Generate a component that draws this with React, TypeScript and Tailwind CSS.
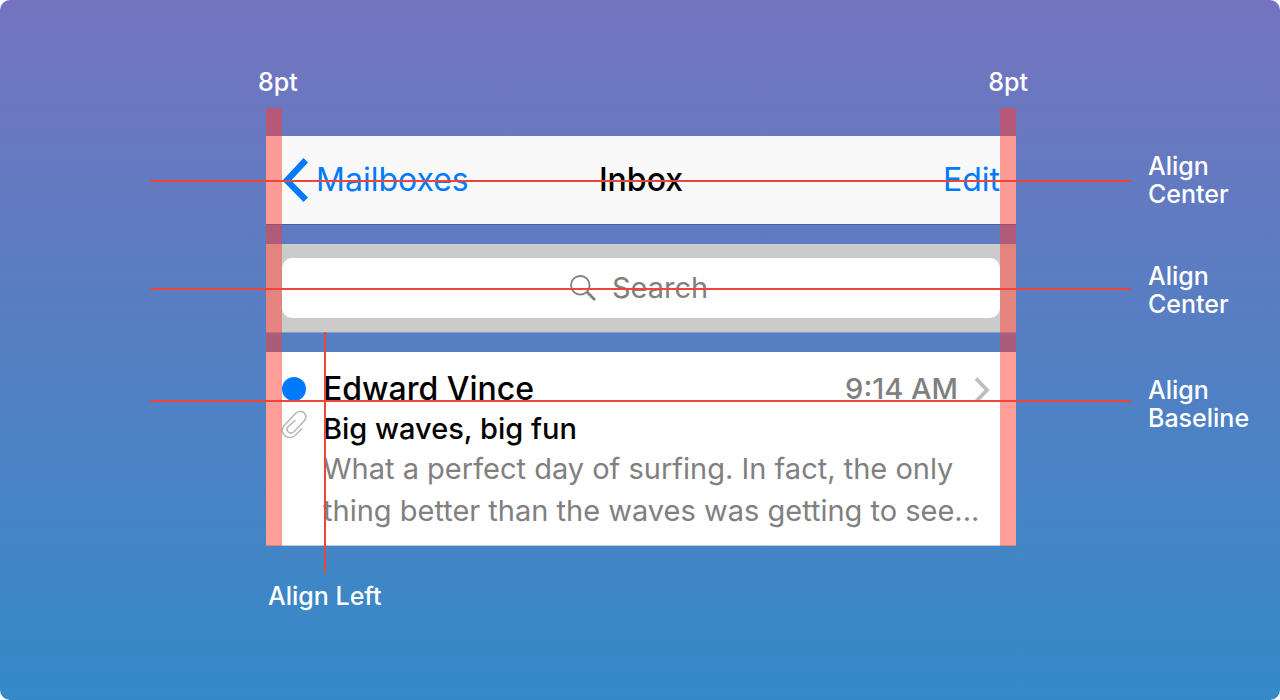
import type { ReactNode } from "react";

function HorizontalGuide({ className }: { className: string }) {
  return (
    <span
      aria-hidden="true"
      className={`pointer-events-none absolute -left-29 -right-[115px] z-20 h-0.5 bg-[#ee4439] ${className}`}
    />
  );
}

function Note({ className, children }: { className: string; children: ReactNode }) {
  return <p className={`col-start-3 pl-33 font-medium ${className}`}>{children}</p>;
}

function NavigationBar() {
  return (
    <header className="relative col-start-2 row-start-1 grid h-22 grid-cols-[1fr_auto_1fr] items-center bg-[#f9f9f9] px-4 text-[32px] leading-10 shadow-[0_1px_0_#4b5f9a]">
      <button type="button" className="flex items-center gap-2 justify-self-start text-[#007aff]">
        <svg width="26" height="44" viewBox="0 0 26 44" fill="currentColor" aria-hidden="true">
          <path d="M.5 22.500 21.500 0 26 4.500 9.200 22.500 26 39.500 21.500 44Z" />
        </svg>
        <span>Mailboxes</span>
      </button>
      <h1 className="font-medium text-black">Inbox</h1>
      <button type="button" className="justify-self-end text-[#007aff]">
        Edit
      </button>
      <HorizontalGuide className="top-11" />
    </header>
  );
}

function SearchBar() {
  return (
    <div className="relative col-start-2 row-start-2 flex h-22 items-center bg-[#cbcbcb] px-4 shadow-[0_1px_0_#809fd0]">
      <label className="flex h-15 flex-1 items-center justify-center gap-4 rounded-[10px] bg-white text-[#808080]">
        <svg width="26" height="26" viewBox="0 0 26 26" fill="none" stroke="currentColor" aria-hidden="true">
          <circle cx="10.3" cy="10.3" r="9.3" strokeWidth="1.8" />
          <path d="m17 17 8 8" strokeWidth="2.8" />
        </svg>
        <input
          type="text"
          aria-label="Search"
          placeholder="Search"
          className="w-25 bg-transparent text-[29px] leading-9 outline-none placeholder:text-[#808080]"
        />
      </label>
      <HorizontalGuide className="top-11" />
    </div>
  );
}

function Message() {
  return (
    <article className="relative col-start-2 row-start-3 grid grid-cols-[41px_1fr] border-b border-[#c8c7cc] bg-white px-4 pb-[13px] pt-4">
      <div className="flex flex-col gap-2">
        <span role="img" aria-label="Unread" className="mt-[9px] size-6 rounded-full bg-[#007aff]" />
        <svg width="26" height="30" viewBox="1 -1 26 30" fill="none" stroke="#b8b8b8" strokeWidth="1.6" strokeLinecap="round" className="overflow-visible" aria-hidden="true">
          <path d="M20.700 19 14 25.500C10.500 28.600 6 28 3.500 25.300.8 22.500.4 19 3 15.800L14.500 3.500C17.500.5 21 .5 23.300 3c2.300 2.600 2 5.500-.4 8.200L13.200 21.500c-2 2-4.300 2-5.900.5-1.700-1.700-1.700-3.800.1-5.700L14 10.500" />
        </svg>
      </div>
      <div className="min-w-0">
        <div className="flex items-center justify-between leading-[42px]">
          <h2 className="text-[32px] font-medium text-black">Edward Vince</h2>
          <div className="flex items-center gap-4 pr-2.5 text-[29px] font-medium text-[#808080]">
            <time>9:14 AM</time>
            <svg width="16" height="26" viewBox="0 0 16 26" fill="none" aria-hidden="true">
              <path d="M2 2.500 13 14 2 25.500" stroke="#bdbdbf" strokeWidth="3.800" />
            </svg>
          </div>
        </div>
        <h3 className="text-[29px] font-medium leading-[38px] text-black">Big waves, big fun</h3>
        <p className="text-[29px] leading-[42px] text-[#808080]">
          What a perfect day of surfing. In fact, the only
          <br />
          thing better than the waves was getting to see...
        </p>
      </div>
      <HorizontalGuide className="top-12" />
      <span
        aria-hidden="true"
        className="pointer-events-none absolute -bottom-7 -top-5 left-[58px] z-20 w-0.5 bg-[#ee4439]"
      />
    </article>
  );
}

export default function App() {
  return (
    <div className="bg-white font-['Inter',sans-serif]">
      <main className="min-h-screen rounded-[10px] bg-linear-to-b/srgb from-[#7474bf] to-[#348ac7] pt-17 text-[25px] font-medium leading-7 text-white">
        <div className="grid grid-cols-[266fr_750fr_264fr] pb-10">
          <div className="col-start-2 -ml-2 -mr-3 flex justify-between">
            <span>8pt</span>
            <span>8pt</span>
          </div>
        </div>
        <div className="grid grid-cols-[266fr_750fr_264fr] gap-y-5 font-normal">
          <NavigationBar />
          <SearchBar />
          <Message />
          <div aria-hidden="true" className="pointer-events-none z-10 col-start-2 row-start-1 row-end-4 -mt-7 flex justify-between">
            <span className="w-4 bg-[#ff3b30]/50" />
            <span className="w-4 bg-[#ff3b30]/50" />
          </div>
          <Note className="row-start-1 self-center">
            Align
            <br />
            Center
          </Note>
          <Note className="row-start-2 self-center pt-1">
            Align
            <br />
            Center
          </Note>
          <Note className="row-start-3 pt-6">
            Align
            <br />
            Baseline
          </Note>
        </div>
        <div className="grid grid-cols-[266fr_750fr_264fr] pt-9">
          <p className="col-start-2 pl-0.5">Align Left</p>
        </div>
      </main>
    </div>
  );
}
